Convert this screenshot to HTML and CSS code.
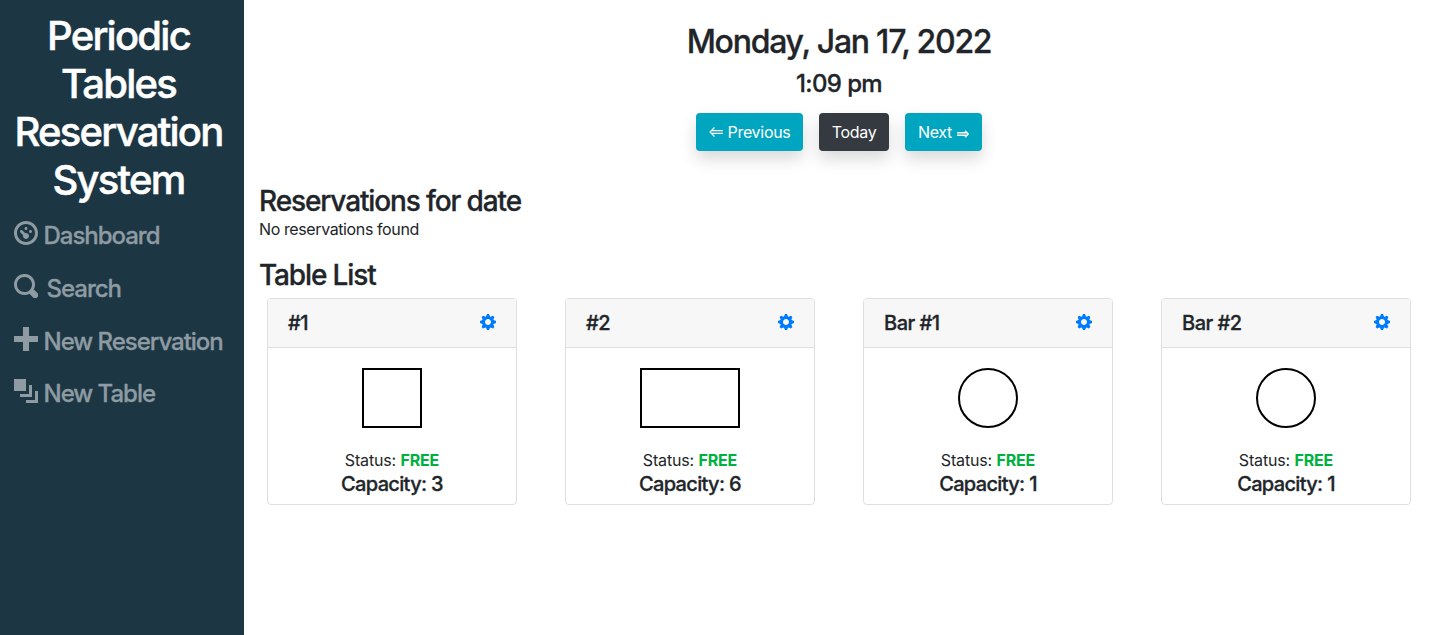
FILE: index.html
```html
<!DOCTYPE html>
<html lang="en">
<head>
<meta charset="utf-8">
<title>Periodic Tables Reservation System</title>
<link rel="stylesheet" href="styles.css">
</head>
<body>
<svg class="symbols" aria-hidden="true">
  <symbol id="dial" viewBox="0 0 8 8"><path d="M4 0c-2.200 0-4 1.800-4 4s1.800 4 4 4 4-1.800 4-4-1.800-4-4-4zm0 1c1.660 0 3 1.340 3 3s-1.340 3-3 3-3-1.340-3-3 1.340-3 3-3zm0 1c-.28 0-.5.22-.5.5s.22.5.5.5.5-.22.5-.5-.22-.5-.5-.5zm-1.660 1a.5.5 0 0 0-.19.84l.91.91c-.02.08-.06.16-.06.25 0 .55.45 1 1 1s1-.45 1-1-.45-1-1-1c-.09 0-.17.04-.25.06l-.91-.91a.5.5 0 0 0-.44-.16.5.5 0 0 0-.06 0zm3.160 0c-.28 0-.5.22-.5.5s.22.5.5.5.5-.22.5-.5-.22-.5-.5-.5z"/></symbol>
  <symbol id="glass" viewBox="0 0 8 8"><path d="M3.500 0c-1.930 0-3.500 1.570-3.500 3.500s1.570 3.500 3.500 3.500c.59 0 1.170-.14 1.660-.41a1 1 0 0 0 .13.13l1 1a1.020 1.020 0 1 0 1.440-1.440l-1-1a1 1 0 0 0-.16-.13c.27-.49.44-1.060.44-1.660 0-1.930-1.550-3.500-3.500-3.500zm0 1c1.390 0 2.500 1.110 2.500 2.500 0 .66-.24 1.270-.66 1.720l-.03.03a1 1 0 0 0-.13.13c-.44.4-1.040.63-1.690.63-1.390 0-2.500-1.110-2.500-2.500s1.110-2.500 2.500-2.500z"/></symbol>
  <symbol id="plus" viewBox="0 0 8 8"><path d="M3 0v3h-3v2h3v3h2v-3h3v-2h-3v-3h-2z"/></symbol>
  <symbol id="layers" viewBox="0 0 8 8"><path d="M0 0v4h4v-4h-4zm5 2v3h-3v1h4v-4h-1zm2 2v3h-3v1h4v-4h-1z"/></symbol>
  <symbol id="cog" viewBox="0 0 8 8"><path d="M3.500 0l-.5 1.190c-.1.03-.19.08-.28.13l-1.190-.5-.72.72.5 1.190c-.05.1-.09.18-.13.28l-1.190.5v1l1.190.5c.04.1.08.18.13.28l-.5 1.190.72.72 1.190-.5c.09.04.18.09.28.13l.5 1.190h1l.5-1.190c.09-.04.19-.08.28-.13l1.190.5.72-.72-.5-1.190c.04-.09.09-.19.13-.28l1.190-.5v-1l-1.190-.5c-.03-.09-.08-.19-.13-.28l.5-1.190-.72-.72-1.190.5c-.09-.04-.19-.09-.28-.13l-.5-1.190h-1zm.5 2.500c.83 0 1.500.67 1.500 1.500s-.67 1.500-1.500 1.500-1.500-.67-1.500-1.500.67-1.500 1.500-1.500z"/></symbol>
</svg>
<div class="app">
  <aside class="sidebar">
    <h1 class="brand">Periodic<br>Tables<br>Reservation<br>System</h1>
    <nav class="menu">
      <a class="menu-item"><svg class="menu-icon"><use href="#dial"/></svg><span class="menu-label">Dashboard</span></a>
      <a class="menu-item menu-item-search"><svg class="menu-icon"><use href="#glass"/></svg><span class="menu-label">Search</span></a>
      <a class="menu-item"><svg class="menu-icon"><use href="#plus"/></svg><span class="menu-label">New Reservation</span></a>
      <a class="menu-item"><svg class="menu-icon"><use href="#layers"/></svg><span class="menu-label">New Table</span></a>
    </nav>
  </aside>
  <main class="content">
    <header class="day">
      <h2 class="day-date">Monday, Jan 17, 2022</h2>
      <h4 class="day-time">1:09 pm</h4>
      <div class="buttons">
        <button class="btn btn-prev"><svg class="arrow arrow-left" viewBox="0 0 14 10"><path d="M5.500.5 1 5l4.500 4.500M2.500 3.600H14M2.500 6.400H14"/></svg><span>Previous</span></button>
        <button class="btn btn-today"><span>Today</span></button>
        <button class="btn btn-next"><span>Next</span><svg class="arrow arrow-right" viewBox="0 0 12 8"><path d="M8 .8 11.200 4 8 7.200M0 2.700h9.700M0 5.300h9.700"/></svg></button>
      </div>
    </header>
    <h3 class="heading">Reservations for date</h3>
    <p class="empty">No reservations found</p>
    <h3 class="heading">Table List</h3>
    <div class="tables">
      <section class="card">
        <div class="card-header"><h5 class="card-name">#1</h5><svg class="cog"><use href="#cog"/></svg></div>
        <div class="card-body"><div class="shape"></div><p class="status">Status: <b class="free">FREE</b></p><h5 class="capacity">Capacity: 3</h5></div>
      </section>
      <section class="card">
        <div class="card-header"><h5 class="card-name">#2</h5><svg class="cog"><use href="#cog"/></svg></div>
        <div class="card-body"><div class="shape shape-wide"></div><p class="status">Status: <b class="free">FREE</b></p><h5 class="capacity">Capacity: 6</h5></div>
      </section>
      <section class="card">
        <div class="card-header"><h5 class="card-name">Bar #1</h5><svg class="cog"><use href="#cog"/></svg></div>
        <div class="card-body"><div class="shape shape-round"></div><p class="status">Status: <b class="free">FREE</b></p><h5 class="capacity">Capacity: 1</h5></div>
      </section>
      <section class="card">
        <div class="card-header"><h5 class="card-name">Bar #2</h5><svg class="cog"><use href="#cog"/></svg></div>
        <div class="card-body"><div class="shape shape-round"></div><p class="status">Status: <b class="free">FREE</b></p><h5 class="capacity">Capacity: 1</h5></div>
      </section>
    </div>
  </main>
</div>
</body>
</html>
```
FILE: styles.css
```css
* { box-sizing: border-box; }
body {
  margin: 0;
  background: #fff;
  color: #212529;
  font: 400 16px/24px Inter, "Liberation Sans", sans-serif;
  overflow: hidden;
}
h1, h2, h3, h4, h5, p { margin: 0; font-weight: 500; }
h1, h2, h3, h4, h5, .menu-label { -webkit-text-stroke: 0.3px currentColor; }
.symbols { display: none; }
.app { display: flex; height: 635px; }

.sidebar {
  width: 244px;
  flex: none;
  background: #1c3644;
  padding: 12px 7px 0 0;
}
.brand {
  color: #fff;
  font-size: 40px;
  line-height: 48px;
  letter-spacing: -1.75px;
  text-align: center;
  -webkit-text-stroke-width: 0.5px;
}
.menu { padding: 5px 0 0 14px; }
.menu-item {
  display: flex;
  align-items: flex-start;
  gap: 5.500px;
  height: 52.800px;
  padding-top: 12px;
  color: #8e9ba2;
  font-size: 24px;
  font-weight: 500;
  line-height: 29px;
  letter-spacing: -1.020px;
  white-space: nowrap;
}
.menu-item-search { gap: 8.500px; }
.menu-icon { width: 24px; height: 24px; flex: none; fill: currentColor; }

.content { flex: 1; padding: 22px 0 0 15px; }
.day { width: 1160px; text-align: center; }
.day-date { font-size: 32px; line-height: 38px; letter-spacing: -1.260px; padding-top: 1px; }
.day-time { font-size: 24px; line-height: 29px; letter-spacing: -0.6px; margin-top: 8px; }
.buttons { display: flex; justify-content: center; gap: 16px; margin-top: 15px; }
.btn {
  display: flex;
  align-items: center;
  justify-content: center;
  height: 38px;
  padding: 0;
  border: 0;
  border-radius: 4px;
  color: #fff;
  font: inherit;
  letter-spacing: -0.3px;
  box-shadow: 0 8px 16px rgba(0, 0, 0, .15);
}
.btn-prev { width: 107px; gap: 5px; background: #00a5bf; }
.btn-today { width: 70px; background: #343a40; }
.btn-next { width: 77px; gap: 5px; background: #00a5bf; }
.arrow { fill: none; stroke: currentColor; }
.arrow-left { width: 14px; height: 10px; stroke-width: 1.100; }
.arrow-right { width: 12px; height: 8px; stroke-width: 1.400; margin-top: 3px; }

.heading { font-size: 28px; line-height: 34px; letter-spacing: -1.130px; margin-top: 32px; padding-top: 1px; }
.empty { font-weight: 400; letter-spacing: -0.390px; margin-top: -1px; }
.empty + .heading { margin-top: 16px; }

.tables { display: flex; gap: 48px; padding: 6px 0 0 8px; }
.card {
  width: 250px;
  height: 207px;
  border: 1px solid #dfdfdf;
  border-radius: 4px;
  overflow: hidden;
}
.card-header {
  display: flex;
  justify-content: space-between;
  height: 49px;
  padding: 12px 20px 0;
  background: #f7f7f7;
  border-bottom: 1px solid #dfdfdf;
}
.card-name { font-size: 20px; line-height: 24px; letter-spacing: -0.5px; }
.capacity { font-size: 20px; line-height: 24px; letter-spacing: -0.660px; }
.cog { width: 16px; height: 16px; margin-top: 3px; fill: #007bff; }
.card-body { display: flex; flex-direction: column; align-items: center; padding-top: 20px; }
.shape { width: 60px; height: 60px; border: 2px solid #000; }
.shape-wide { width: 100px; }
.shape-round { border-radius: 50%; }
.status { font-weight: 400; margin-top: 20px; letter-spacing: -0.150px; }
.free { color: #00b140; }
```
